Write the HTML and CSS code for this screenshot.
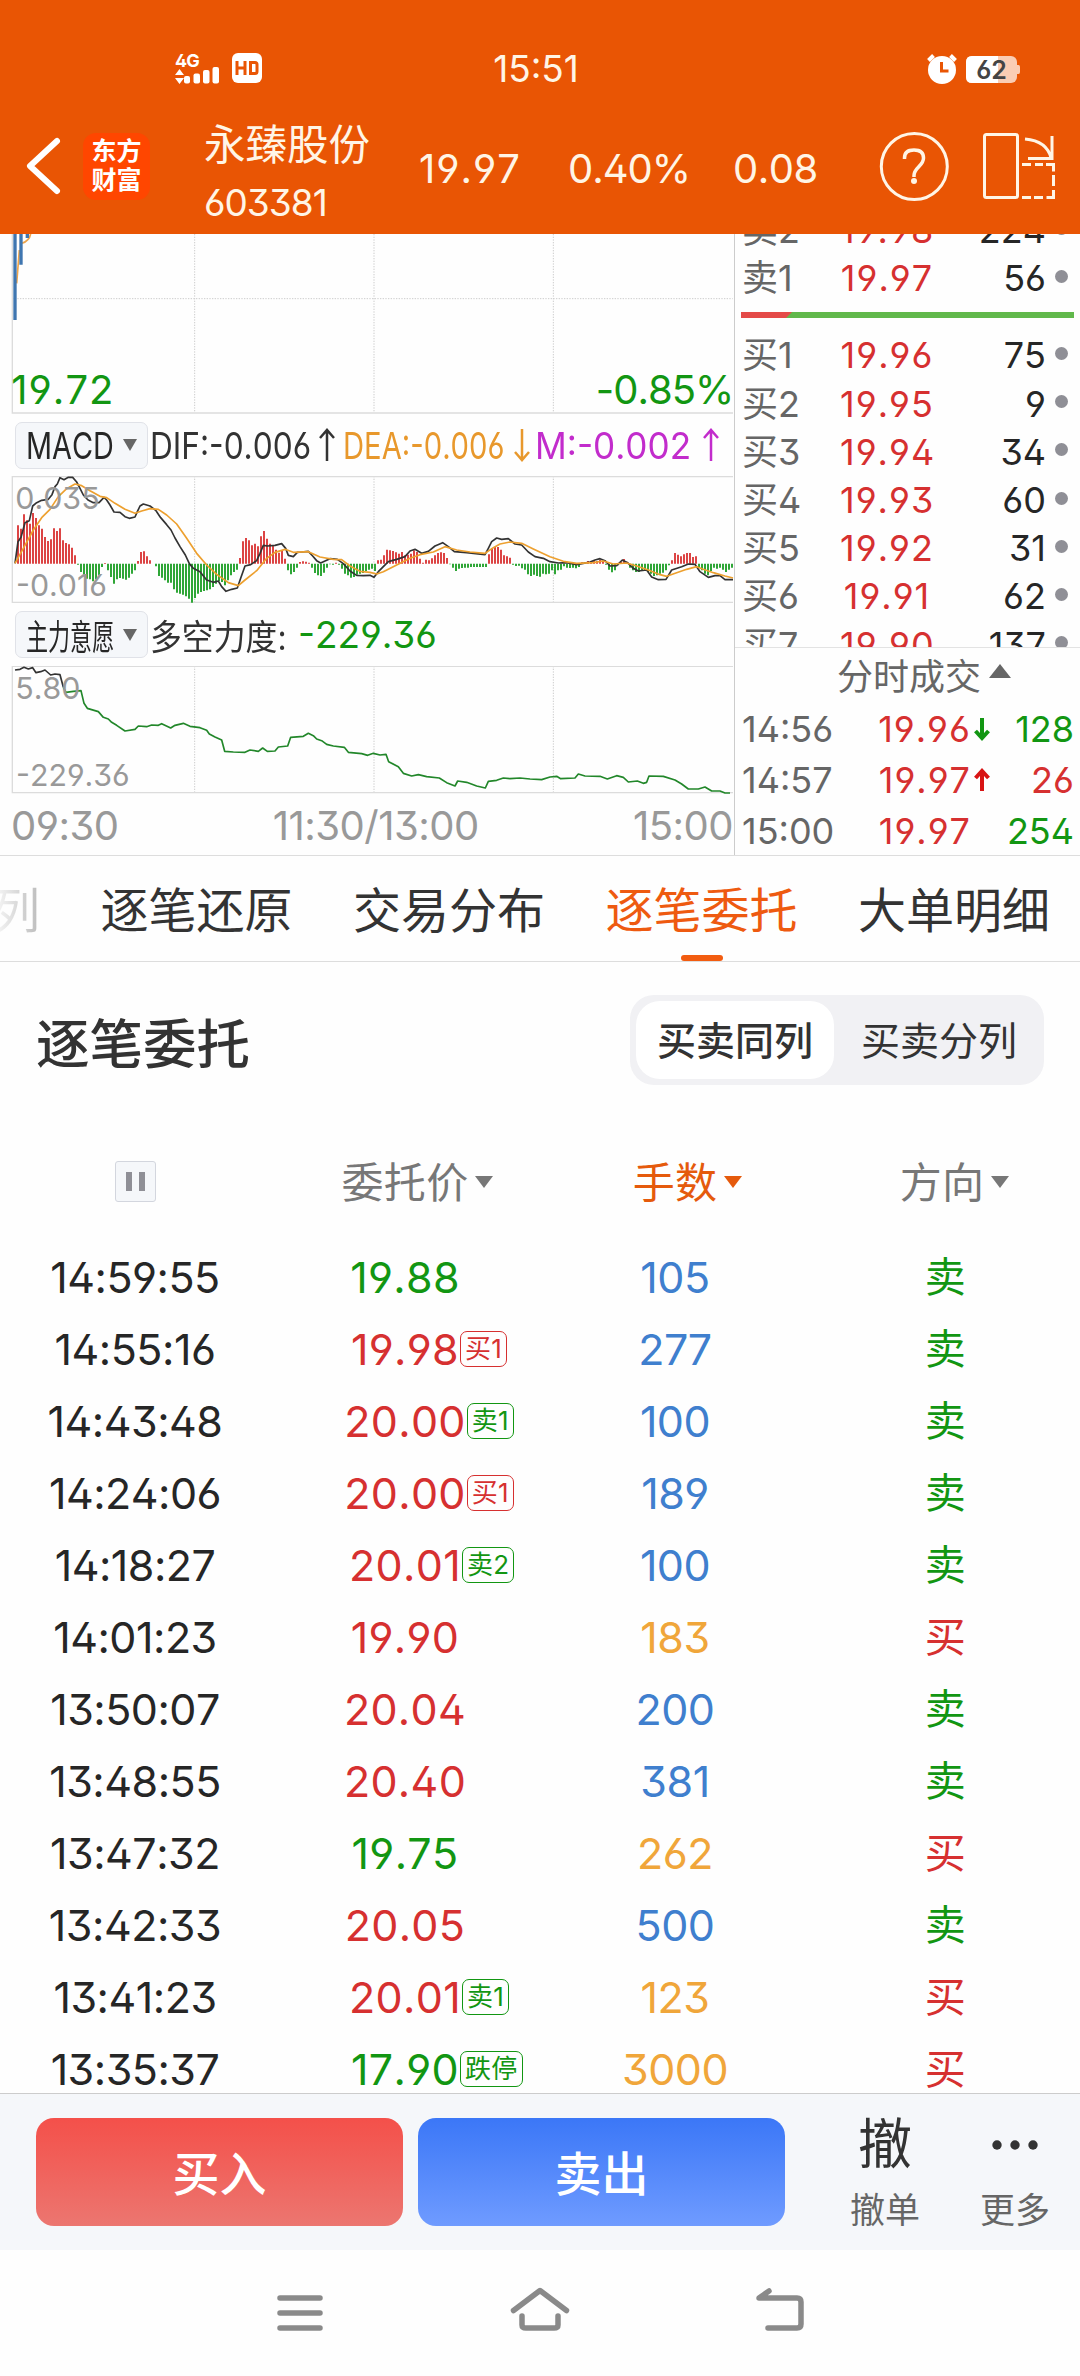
FILE: index.html
```html
<!DOCTYPE html>
<html lang="zh-CN">
<head>
    <meta charset="UTF-8">
    <title>永臻股份 603381</title>
    <link rel="stylesheet" href="styles.css">
</head>
<body>
<div class="header">
    <div class="status">
        <svg class="signal" width="90" height="32" viewBox="0 0 90 32" fill="#fff">
            <text x="0" y="15" class="net">4G</text>
            <path d="M0 23l4.5-6 4.5 6zM0 26h9l-4.5 6z"/>
            <rect x="9" y="24" width="6" height="7.500" rx="2"/>
            <rect x="18.500" y="21.500" width="6.500" height="10" rx="2"/>
            <rect x="28" y="18" width="6.500" height="13.500" rx="2"/>
            <rect x="37.500" y="15" width="6.500" height="16.500" rx="2"/>
            <rect x="57" y="1" width="30" height="30" rx="6"/>
            <path d="M62 9v14M70 9v14M62 16h8M75.500 10.500h4.500q2 0 2 2v7q0 2-2 2h-4.500z" fill="none" stroke="#e95504" stroke-width="3"/>
        </svg>
        <span class="clock">15:51</span>
        <svg class="power" width="96" height="32" viewBox="0 0 96 32">
            <circle cx="15" cy="18" r="14" fill="#fff"/>
            <path d="M1.500 8.500l5-5M28.500 8.500l-5-5" stroke="#fff" stroke-width="4"/>
            <path d="M14.500 10v9h7" fill="none" stroke="#e95504" stroke-width="3"/>
            <rect x="39" y="4" width="51" height="27" rx="6" fill="#facdb4"/>
            <path d="M90 13h1.500q1.500 0 1.500 2v5q0 2-1.500 2H90z" fill="#facdb4"/>
            <path d="M45 4h26v27H45q-6 0-6-6V10q0-6 6-6z" fill="#fff"/>
            <text x="64.500" y="26.500" class="level">62</text>
        </svg>
    </div>
    <div class="bar">
        <svg class="back" width="40" height="60" viewBox="0 0 40 60"><path d="M35 5L8 30l27 25" fill="none" stroke="#fff" stroke-width="6" stroke-linecap="round" stroke-linejoin="round"/></svg>
        <div class="logo">东方<br>财富</div>
        <div class="stock">
            <div class="name">永臻股份</div>
            <div class="code">603381</div>
        </div>
        <span class="quote q1">19.97</span>
        <span class="quote q2">0.40%</span>
        <span class="quote q3">0.08</span>
        <svg class="tools" width="180" height="72" viewBox="876 130 180 72" fill="none" stroke="#fff5e6" stroke-width="3">
            <circle cx="913.300" cy="166.500" r="33"/>
            <path d="M903.500 159v-1q0-8 9.500-8t9.500 8q0 4-4.500 8.500-5 5-5 9v1.500" stroke-width="3.500"/>
            <circle cx="913" cy="181" r="3" fill="#fff5e6" stroke="none"/>
            <rect x="983.500" y="134.500" width="33" height="63" rx="2"/>
            <path d="M1024 139q22 2 26 19M1051 136v22.500h-24"/>
            <path d="M1021 164.500h9M1034 164.500h8M1045 164.500h7.500v7M1052.500 175v11M1052.500 190v7.500h-7M1042 197.500h-9M1030 197.500h-9"/>
        </svg>
    </div>
</div>

<div class="market">
    <div class="charts">
        <svg width="734" height="180" viewBox="0 12 2202 540" fill="none">
            <path class="grid" d="M36 206H2198M584 12v536M1122 12v536M1660 12v536"/>
            <path class="frame" d="M37 12v537H2199"/>
            <path d="M50 160L58 60M66 40Q88 32 92 12" stroke="#eda44b" stroke-width="5"/>
            <path d="M45 12v258M63 12v92M82 12v12" stroke="#3f76b0" stroke-width="10"/>
            <text x="34" y="521" class="limit first">19.72</text>
            <text x="2200" y="521" class="limit end">-0.85%</text>
        </svg>
        <div class="indicator">
            <div class="chip"><span class="chip-en">MACD</span><i></i></div>
            <span class="val dif">DIF:-0.006</span>
            <svg class="arrow" width="18" height="34" viewBox="0 0 18 34"><path d="M9 33V2M2 10l7-8 7 8"/></svg>
            <span class="val dea">DEA:-0.006</span>
            <svg class="arrow orange" width="18" height="34" viewBox="0 0 18 34"><path d="M9 1v31M2 24l7 8 7-8"/></svg>
            <span class="val m">M:-0.002</span>
            <svg class="arrow purple" width="18" height="34" viewBox="0 0 18 34"><path d="M9 33V2M2 10l7-8 7 8"/></svg>
        </div>
        <svg width="734" height="127" viewBox="0 738 2202 381" fill="none">
            <path class="grid" d="M584 738v380M1122 738v380M1660 738v380"/>
            <path class="frame" d="M37 738V1117H2199M37 740H2199"/>
            <g id="bars"></g>
            <path class="line" stroke="#333" d="M45 1000L54 935 63 922 75 878 88 872 98 828 110 818 125 811 145 808 156 794 165 770 172 762 180 743 192 749 205 742 218 742 230 756 240 775 250 795 264 810 280 818 297 818 312 802 320 810 330 825 342 846 360 847 375 860 388 865 405 861 412 845 420 828 430 822 450 828 468 842 482 863 500 884 513 900 525 924 540 950 556 975 568 1001 580 1015 600 1025 620 1050 640 1057 655 1053 665 1070 678 1084 695 1078 712 1074 722 1045 735 1008 752 1004 770 992 780 970 790 946 802 948 825 946 845 941 857 955 865 976 880 980 892 967 905 966 925 964 938 978 950 992 962 999 975 993 990 986 1012 988 1030 1001 1050 1023 1070 1036 1090 1037 1110 1036 1122 1042 1135 1025 1150 1010 1165 995 1190 988 1215 980 1230 963 1245 958 1265 970 1285 964 1305 948 1328 938 1345 950 1363 965 1400 968 1455 974 1465 955 1475 935 1490 924 1505 928 1525 926 1545 942 1565 945 1585 966 1605 980 1630 985 1650 995 1675 999 1700 998 1730 1004 1750 1000 1770 996 1785 990 1800 986 1815 992 1830 1008 1850 1007 1867 990 1885 1000 1900 1015 1915 1023 1940 1020 1955 1041 1975 1049 1998 1048 2015 1020 2045 1010 2065 1002 2085 1003 2100 1025 2125 1042 2145 1037 2160 1037 2175 1049 2199 1049"/>
            <path class="line" stroke="#eda02f" d="M45 1000L70 955 100 900 125 863 150 838 175 800 200 776 225 762 245 767 270 782 300 799 320 803 345 820 375 838 405 850 425 843 450 836 475 838 500 855 530 882 560 925 590 970 620 1005 650 1033 685 1058 715 1067 735 1050 770 1022 800 985 825 967 855 958 880 967 925 965 960 981 1000 988 1025 989 1050 1008 1080 1024 1110 1027 1130 1032 1150 1025 1190 1005 1230 985 1260 974 1300 966 1335 950 1370 960 1410 966 1455 970 1480 953 1500 942 1530 936 1565 940 1600 957 1650 980 1690 994 1730 1000 1780 998 1810 993 1840 1002 1880 999 1910 1008 1945 1020 1980 1034 2000 1039 2030 1028 2060 1018 2090 1010 2110 1018 2140 1028 2175 1038 2199 1044"/>
            <text x="46" y="838" class="scale">0.035</text>
            <text x="48" y="1099" class="scale">-0.016</text>
        </svg>
        <div class="indicator">
            <div class="chip"><span class="chip-cn">主力意愿</span><i></i></div>
            <span class="val force">多空力度:</span>
            <span class="val force-num">-229.36</span>
        </div>
        <svg width="734" height="128" viewBox="0 198 2202 384" fill="none">
            <path class="grid" d="M584 198v380M1122 198v380M1660 198v380"/>
            <path class="frame" d="M37 198V578H2199M37 199H2199"/>
            <path class="line" stroke="#333" d="M45 210L60 208 72 202 85 207 98 203 108 218 122 215 135 210 152 225 165 222 180 224 190 262"/>
            <path class="line" stroke="#22872a" d="M190 262L198 277 220 274 243 272 252 310 262 325 295 335 310 352 325 357 335 367 350 376 375 393 405 388 415 378 440 380 455 375 475 376 485 371 512 384 525 376 550 370 570 379 600 383 620 391 628 402 645 411 665 420 674 454 700 456 735 457 750 450 775 454 788 444 802 454 825 453 835 441 863 438 872 412 910 409 925 400 940 407 950 417 965 422 980 433 1000 438 1033 442 1045 457 1085 461 1103 466 1120 460 1140 465 1158 463 1166 485 1195 500 1210 520 1235 528 1255 524 1280 530 1318 534 1340 548 1365 558 1373 543 1400 547 1430 558 1456 564 1465 544 1490 541 1510 534 1530 536 1560 534 1590 537 1625 539 1650 531 1670 529 1682 536 1725 534 1735 522 1755 528 1800 529 1822 537 1850 527 1870 532 1885 546 1912 543 1930 550 1940 547 1947 528 1990 529 2025 540 2045 552 2065 567 2095 567 2115 561 2135 573 2160 573 2175 579 2190 579"/>
            <text x="46" y="297" class="scale">5.80</text>
            <text x="48" y="558" class="scale">-229.36</text>
        </svg>
        <div class="axis"><span>09:30</span><span>11:30/13:00</span><span>15:00</span></div>
    </div>

    <div class="book">
        <div class="orders">
            <div class="order up"><span>卖2</span><b>19.98</b><em>224</em><i></i></div>
            <div class="order"><span>卖1</span><b>19.97</b><em>56</em><i></i></div>
            <svg class="ratio" width="333" height="6" viewBox="0 0 333 6"><path d="M0 0h333v6H0z" fill="#61b84b"/><path d="M0 0h51l-6 6H0z" fill="#e44a48"/></svg>
            <div class="order"><span>买1</span><b>19.96</b><em>75</em><i></i></div>
            <div class="order"><span>买2</span><b>19.95</b><em>9</em><i></i></div>
            <div class="order"><span>买3</span><b>19.94</b><em>34</em><i></i></div>
            <div class="order"><span>买4</span><b>19.93</b><em>60</em><i></i></div>
            <div class="order"><span>买5</span><b>19.92</b><em>31</em><i></i></div>
            <div class="order"><span>买6</span><b>19.91</b><em>62</em><i></i></div>
            <div class="order"><span>买7</span><b>19.90</b><em>137</em><i></i></div>
        </div>
        <div class="deal-title">分时成交<i></i></div>
        <div class="deal"><span>14:56</span><b>19.96</b><svg width="16" height="24" viewBox="0 0 16 24"><path d="M8 1v20M1.500 14L8 21l6.500-7" stroke="#129612"/></svg><em class="green">128</em></div>
        <div class="deal"><span>14:57</span><b>19.97</b><svg width="16" height="24" viewBox="0 0 16 24"><path d="M8 23V3M1.500 10L8 3l6.500 7" stroke="#d81414"/></svg><em class="red">26</em></div>
        <div class="deal"><span>15:00</span><b>19.97</b><svg width="16" height="24"></svg><em class="green">254</em></div>
    </div>
</div>

<ul class="tabs">
    <li class="cut">列</li>
    <li>逐笔还原</li>
    <li>交易分布</li>
    <li class="select">逐笔委托</li>
    <li>大单明细</li>
</ul>

<div class="title">
    <h2>逐笔委托</h2>
    <div class="switch"><span class="select">买卖同列</span><span>买卖分列</span></div>
</div>

<div class="table">
    <div class="row head">
        <div><span class="pause"></span></div>
        <div><span>委托价<i></i></span></div>
        <div class="select"><span>手数<i></i></span></div>
        <div><span class="dir">方向<i></i></span></div>
    </div>
    <div class="row"><div>14:59:55</div><div class="green"><span>19.88</span></div><div class="blue">105</div><div class="green">卖</div></div>
    <div class="row"><div>14:55:16</div><div class="red"><span>19.98<u class="red">买1</u></span></div><div class="blue">277</div><div class="green">卖</div></div>
    <div class="row"><div>14:43:48</div><div class="red"><span>20.00<u class="green">卖1</u></span></div><div class="blue">100</div><div class="green">卖</div></div>
    <div class="row"><div>14:24:06</div><div class="red"><span>20.00<u class="red">买1</u></span></div><div class="blue">189</div><div class="green">卖</div></div>
    <div class="row"><div>14:18:27</div><div class="red"><span>20.01<u class="green">卖2</u></span></div><div class="blue">100</div><div class="green">卖</div></div>
    <div class="row"><div>14:01:23</div><div class="red"><span>19.90</span></div><div class="yellow">183</div><div class="red">买</div></div>
    <div class="row"><div>13:50:07</div><div class="red"><span>20.04</span></div><div class="blue">200</div><div class="green">卖</div></div>
    <div class="row"><div>13:48:55</div><div class="red"><span>20.40</span></div><div class="blue">381</div><div class="green">卖</div></div>
    <div class="row"><div>13:47:32</div><div class="green"><span>19.75</span></div><div class="yellow">262</div><div class="red">买</div></div>
    <div class="row"><div>13:42:33</div><div class="red"><span>20.05</span></div><div class="blue">500</div><div class="green">卖</div></div>
    <div class="row"><div>13:41:23</div><div class="red"><span>20.01<u class="green">卖1</u></span></div><div class="yellow">123</div><div class="red">买</div></div>
    <div class="row"><div>13:35:37</div><div class="green"><span>17.90<u class="green">跌停</u></span></div><div class="yellow">3000</div><div class="red">买</div></div>
</div>

<div class="footer">
    <div class="btn buy">买入</div>
    <div class="btn sell">卖出</div>
    <div class="act first"><b>撤</b><span>撤单</span></div>
    <div class="act"><svg width="52" height="54" viewBox="0 0 52 54" fill="#333"><circle cx="8" cy="27" r="4.700"/><circle cx="26" cy="27" r="4.700"/><circle cx="44" cy="27" r="4.700"/></svg><span>更多</span></div>
</div>

<div class="nav">
    <svg width="1080" height="126" viewBox="0 2250 1080 126" fill="none" stroke="#8a8a8a" stroke-width="5.500" stroke-linecap="round" stroke-linejoin="round">
        <path d="M280 2298h40M280 2313h40M280 2328h40"/>
        <path d="M513.500 2310.500L540 2290.500l26.500 20M522 2316v9q0 3 4 3h28q4 0 4-3v-9"/>
        <path d="M768 2328h29q4 0 4-4v-22q0-4-4-4h-38l10-7"/>
    </svg>
</div>

<script type="text/javascript" src="bars.js"></script>
</body>
</html>
```
FILE: bars.js
```js
// MACD柱: 每分钟一根,正数红色向上,负数绿色向下
var data = [115, 105, 148, 130, 120, 152, 137, 115, 105, 80, 68, 73, 106, 98, 106, 70, 62, 58, 48, 25, -3, -25, -37, -45, -47, -53, -47, -35, -10, 2,
    -20, -40, -60, -47, -43, -45, -48, -42, -30, -20, 8, 35, 37, 22, 10, 0, -8, -37, -42, -50, -57, -57, -77, -87, -90, -93, -98, -105, -117, -103,
    -90, -85, -82, -80, -77, -70, -60, -52, -55, -65, -50, -35, -25, -18, 17, 67, 77, 70, 55, 60, 52, 82, 98, 75, 60, 55, 42, 33, 38, 15,
    -20, -32, -25, -12, 5, 7, 6, 3, -12, -28, -35, -37, -27, -12, -2, -3, 3, -3, -15, -30, -35, -42, -40, -33, -30, -28, -22, -18, -15, -22,
    10, 12, 25, 42, 40, 38, 34, 30, 35, 25, 27, 30, 40, 35, 15, 3, 12, 10, 16, 25, 32, 34, 32, 17, -2, -12, -22, -15, -13, -12,
    -12, -10, -10, -10, -10, -10, -10, 28, 47, 50, 50, 42, 25, 22, 18, -3, -7, -6, -14, -18, -32, -37, -33, -37, -39, -30, -32, -30, -20, -32,
    -20, -18, -8, -12, -13, -12, -14, -10, 4, 5, 8, 5, 10, 8, 12, 8, -3, -18, -26, -20, -5, 5, 14, 6, -12, -20, -25, -25, -20, -20,
    -25, -30, -37, -35, -30, -27, -20, -5, 10, 32, 27, 22, 28, 32, 32, 20, 22, -10, -20, -30, -35, -22, -12, -15, -12, -18, -25, -18, -12, -8];
var red = "", green = "";
for (var i = 0; i < data.length; i++) {
    var x = 54 + i * 9;
    if (data[i] > 0) {
        red += "M" + x + " 1001v" + -data[i];
    } else {
        green += "M" + x + " 1001v" + -data[i];
    }
}
document.getElementById("bars").innerHTML = '<path class="bar-up" d="' + red + '"/><path class="bar-down" d="' + green + '"/>';
```
FILE: styles.css
```css
* {
    margin: 0;
    padding: 0;
    box-sizing: border-box;
}

body {
    width: 1080px;
    height: 2376px;
    overflow: hidden;
    display: flex;
    flex-direction: column;
    background: #fefefe;
    color: #262626;
    font-family: Inter, "Noto Sans CJK SC", sans-serif;
    font-feature-settings: "ss01";
    font-kerning: none;
    white-space: nowrap;
}

ul, li {
    list-style: none;
}

i, em {
    font-style: normal;
}

b {
    font-weight: normal;
}

svg {
    display: block;
    flex: none;
}

.red {
    color: #d63030;
}

.green {
    color: #129612;
}

.blue {
    color: #3f7fce;
}

.yellow {
    color: #f0a63a;
}

/*顶部*/
.header {
    height: 234px;
    flex: none;
    background: #e95504;
    color: #fff5e6;
}

.status {
    display: flex;
    align-items: center;
    height: 98px;
    padding: 38px 57px 0 175px;
}

.status .clock {
    width: 90px;
    margin-left: 226px;
    text-align: center;
    font-size: 37px;
}

.status .power {
    margin-left: auto;
}

.net {
    font-size: 18px;
    font-weight: 700;
    letter-spacing: -1px;
}

.level {
    font-size: 25px;
    font-weight: 600;
    text-anchor: middle;
    fill: #444;
}

.bar {
    display: flex;
    align-items: center;
    height: 136px;
    padding-left: 22px;
}

.logo {
    width: 67px;
    height: 67px;
    margin-left: 21px;
    padding-top: 4px;
    border-radius: 13px;
    background: #ff4600;
    color: #fff;
    text-align: center;
    font-size: 25px;
    font-weight: 700;
    line-height: 29px;
}

.stock {
    width: 215px;
    margin-left: 54px;
    padding-top: 15px;
}

.stock .name {
    font-size: 41.5px;
    line-height: 58px;
}

.stock .code {
    font-size: 37px;
    line-height: 57px;
    letter-spacing: -1px;
}

.quote {
    font-size: 40px;
    line-height: 48px;
    margin-top: 5px;
}

.q1 {
    width: 149px;
    letter-spacing: 1px;
}

.q2 {
    width: 165px;
    letter-spacing: -1px;
}

.q3 {
    width: 144px;
    letter-spacing: -.5px;
}

/*行情*/
.market {
    display: flex;
    height: 622px;
    flex: none;
    border-bottom: 1px solid #ddd;
}

.charts {
    width: 735px;
    border-right: 1px solid #ccc;
}

.grid {
    stroke: #ccc;
    stroke-width: 3;
    stroke-dasharray: 4 4;
}

.frame {
    stroke: #dcdcdc;
    stroke-width: 4;
}

.line {
    stroke-width: 5;
    stroke-linejoin: round;
}

.bar-up {
    stroke: #dc4444;
    stroke-width: 6;
}

.bar-down {
    stroke: #2fa637;
    stroke-width: 6;
}

.limit {
    font-size: 120px;
    fill: #129612;
}

.limit.first {
    letter-spacing: 3px;
}

.limit.end {
    text-anchor: end;
    letter-spacing: -3px;
}

.scale {
    font-size: 91px;
    fill: #999;
}

.indicator {
    display: flex;
    align-items: center;
    height: 62px;
    padding-left: 15px;
}

.indicator + svg + .indicator {
    height: 63px;
}

.chip {
    display: flex;
    align-items: center;
    width: 133px;
    height: 47px;
    padding-left: 10px;
    border: 1px solid #e0e2e8;
    border-radius: 7px;
    background: #f5f7fa;
}

.chip span, .val {
    display: block;
    flex: none;
    transform-origin: left center;
}

.chip span {
    width: 97px;
}

.chip i {
    border: 7px solid transparent;
    border-top: 12px solid #666;
    border-bottom: 0;
}

.chip-en {
    font-size: 37px;
    transform: scaleX(.78);
}

.chip-cn {
    font-size: 35px;
    transform: scaleX(.63);
}

.val {
    font-size: 37px;
    color: #333;
}

.arrow {
    fill: none;
    stroke: #333;
    stroke-width: 2.5;
}

.arrow.orange {
    stroke: #e8982c;
}

.arrow.purple {
    stroke: #c22ccc;
}

.dif {
    width: 168px;
    margin-left: 2px;
    transform: scaleX(.855);
}

.dea {
    width: 170px;
    margin-left: 7px;
    color: #e8982c;
    transform: scaleX(.79);
}

.m {
    width: 167px;
    margin-left: 4px;
    color: #c22ccc;
    transform: scaleX(.95);
}

.force {
    width: 148px;
    margin-left: 2px;
    font-size: 35px;
    transform: scaleX(.91);
}

.force-num {
    color: #129612;
}

.axis {
    display: flex;
    justify-content: space-between;
    padding: 8px 1px 0 11px;
    color: #999;
    font-size: 40px;
    line-height: 48px;
    letter-spacing: -.5px;
}

/*五档*/
.book {
    width: 345px;
    font-size: 36px;
    color: #666;
}

.book b {
    color: #d63030;
    letter-spacing: 1px;
}

.orders {
    height: 414px;
    overflow: hidden;
    border-bottom: 1px solid #e3e3e3;
}

.order {
    display: flex;
    align-items: center;
    height: 48.2px;
    line-height: 48px;
    padding-left: 7px;
}

.order.up {
    margin-top: -28px;
}

.order span {
    width: 98px;
}

.order b {
    width: 94px;
    text-align: center;
}

.order em {
    width: 112px;
    text-align: right;
    color: #262626;
}

.order i {
    width: 13px;
    height: 13px;
    margin: -4px 0 0 9px;
    border-radius: 50%;
    background: #8f8f96;
}

.ratio {
    margin: 10px 0 13px 6px;
}

.deal-title {
    display: flex;
    align-items: center;
    height: 55px;
    padding: 0 0 3px 102px;
}

.deal-title i {
    margin: -6px 0 0 8px;
    border: 11px solid transparent;
    border-top: 0;
    border-bottom: 14px solid #666;
}

.deal {
    display: flex;
    align-items: center;
    height: 51.2px;
    padding: 0 6px 0 7px;
}

.deal span {
    width: 134px;
}

.deal b {
    width: 95px;
    text-align: right;
}

.deal svg {
    margin-left: 3px;
    fill: none;
    stroke-width: 4;
}

.deal em {
    flex: 1;
    text-align: right;
}

/*选项卡*/
.tabs {
    display: flex;
    height: 106px;
    flex: none;
    gap: 60.5px;
    padding-left: 102px;
    border-bottom: 1px solid #ddd;
    color: #333;
    font-size: 48px;
    line-height: 109px;
    overflow: hidden;
}

.tabs .cut {
    margin-left: -174px;
    width: 112px;
    text-align: right;
    background: linear-gradient(to right, #fefefe 62px, #bbb);
    -webkit-background-clip: text;
    color: transparent;
}

.tabs .select {
    position: relative;
    color: #ee5a10;
}

.tabs .select:after {
    content: "";
    position: absolute;
    left: 75px;
    top: 99px;
    width: 42px;
    height: 6px;
    border-radius: 3px;
    background: #f25c10;
}

.title {
    display: flex;
    align-items: center;
    justify-content: space-between;
    height: 156px;
    flex: none;
    padding: 0 36px;
    color: #333;
}

.title h2 {
    font-size: 53.5px;
    font-weight: 500;
}

.switch {
    display: flex;
    width: 414px;
    height: 90px;
    padding: 6px;
    border-radius: 24px;
    background: #f1f1f4;
    font-size: 39px;
    line-height: 80px;
    text-align: center;
}

.switch span {
    flex: 1;
    padding-left: 6px;
}

.switch .select {
    flex: none;
    width: 198px;
    padding-left: 0;
    border-radius: 24px;
    background: #fff;
    font-weight: 500;
}

/*委托列表*/
.table {
    height: 975px;
    flex: none;
    overflow: hidden;
}

.row {
    display: grid;
    grid-template-columns: repeat(4, 270px);
    height: 72px;
    line-height: 72px;
    text-align: center;
    font-size: 43px;
    letter-spacing: -.5px;
}

.row > div:last-child {
    font-size: 41px;
}

.row span {
    position: relative;
    letter-spacing: .3px;
}

.row u {
    position: absolute;
    left: 100%;
    top: 8px;
    margin-left: 1px;
    padding: 0 4px;
    height: 36px;
    border: 1px solid;
    border-radius: 7px;
    text-decoration: none;
    font-size: 26px;
    line-height: 34px;
}

.head {
    height: 123px;
    line-height: 129px;
    color: #777;
}

.head > div, .head > div:last-child {
    font-size: 42px;
    letter-spacing: 0;
}

.head .select {
    color: #e55a0c;
}

.head .dir {
    right: 3px;
}

.head i {
    position: absolute;
    left: 100%;
    top: 19px;
    margin-left: 7px;
    border: 9px solid transparent;
    border-top: 12px solid;
    border-bottom: 0;
}

.pause {
    display: block;
    width: 41px;
    height: 41px;
    margin: 43px auto 0;
    border: 1px solid #d3d6de;
    border-radius: 3px;
    background: linear-gradient(#8f8f96, #8f8f96) 10px 10px / 6px 19px no-repeat, linear-gradient(#8f8f96, #8f8f96) 23px 10px / 6px 19px no-repeat, #f5f7fa;
}

/*底部*/
.footer {
    display: flex;
    height: 157px;
    flex: none;
    padding: 24px 0 0 36px;
    border-top: 1px solid #ccc;
    background: #f5f7fa;
}

.btn {
    width: 367px;
    height: 108px;
    margin-right: 15px;
    border-radius: 18px;
    color: #fff;
    font-size: 47px;
    font-weight: 500;
    line-height: 112px;
    text-align: center;
}

.buy {
    background: linear-gradient(#f4504a, #ec7670);
}

.sell {
    background: linear-gradient(#3b77f7, #6f9bff);
}

.act {
    display: flex;
    flex-direction: column;
    align-items: center;
    width: 130px;
    color: #666;
    font-size: 35px;
}

.act.first {
    margin-left: 20px;
}

.act b {
    height: 54px;
    font-size: 54px;
    line-height: 54px;
    color: #333;
}

.act span {
    margin-top: 14px;
    line-height: 48px;
}

.nav {
    height: 126px;
    flex: none;
}
```
